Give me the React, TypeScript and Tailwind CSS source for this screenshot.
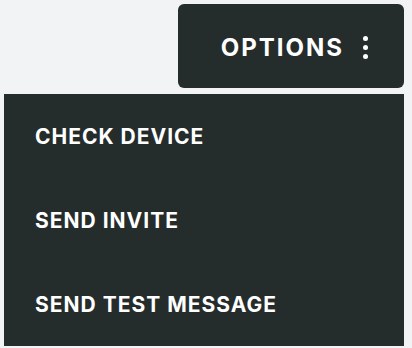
export default function App() {
  const items = ["CHECK DEVICE", "SEND INVITE", "SEND TEST MESSAGE"];

  return (
    <div
      className="h-[348px] w-[412px] overflow-hidden bg-[#f2f3f5] pt-1 pl-1 pr-2"
      style={{ fontFamily: "Inter, 'Open Sans', sans-serif" }}
    >
      <div className="flex justify-end">
        <button className="flex h-[84px] w-[226px] items-center justify-end gap-[19px] rounded-md bg-[#252c2c] pr-[36px] pt-[4px] text-white">
          <span className="text-[24px] font-bold tracking-[2px]">OPTIONS</span>
          <span className="flex flex-col gap-[4px] pb-[2px]">
            <span className="h-[5px] w-[5px] rounded-full bg-white" />
            <span className="h-[5px] w-[5px] rounded-full bg-white" />
            <span className="h-[5px] w-[5px] rounded-full bg-white" />
          </span>
        </button>
      </div>

      {/* dropdown */}
      <ul className="mt-[6px] bg-[#252c2c] text-white">
        {items.map((label) => (
          <li
            key={label}
            className="flex h-[84px] items-center pl-[31px] pt-[1px] text-[21px] font-bold tracking-[1px]"
          >
            {label}
          </li>
        ))}
      </ul>
    </div>
  );
}
